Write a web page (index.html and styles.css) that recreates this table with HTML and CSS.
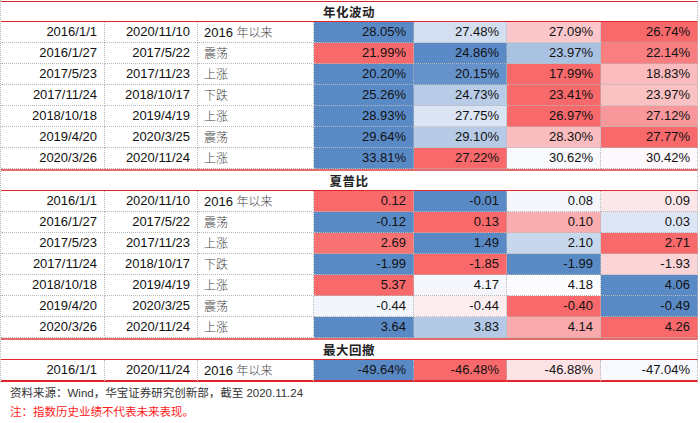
FILE: index.html
```html
<!DOCTYPE html>
<html lang="zh-CN">
<head>
<meta charset="utf-8">
<link rel="stylesheet" href="styles.css">
</head>
<body>
<div class="tbl">
  <div class="hd first">年化波动</div>
  <div class="c d">2016/1/1</div><div class="c d">2020/11/10</div><div class="c t">2016 <span class="cn">年以来</span></div>
  <div class="c n" style="background:#5A8AC6">28.05%</div><div class="c n" style="background:#D3DFF0">27.48%</div><div class="c n" style="background:#FBC7CA">27.09%</div><div class="c n" style="background:#F8696B">26.74%</div>
  <div class="c d">2016/1/27</div><div class="c d">2017/5/22</div><div class="c t"><span class="cn">震荡</span></div>
  <div class="c n" style="background:#F8696B">21.99%</div><div class="c n" style="background:#5A8AC6">24.86%</div><div class="c n" style="background:#AAC2E2">23.97%</div><div class="c n" style="background:#F97E80">22.14%</div>
  <div class="c d">2017/5/23</div><div class="c d">2017/11/23</div><div class="c t"><span class="cn">上涨</span></div>
  <div class="c n" style="background:#5A8AC6">20.20%</div><div class="c n" style="background:#6592CA">20.15%</div><div class="c n" style="background:#F8696B">17.99%</div><div class="c n" style="background:#FABBBE">18.83%</div>
  <div class="c d">2017/11/24</div><div class="c d">2018/10/17</div><div class="c t"><span class="cn">下跌</span></div>
  <div class="c n" style="background:#5A8AC6">25.26%</div><div class="c n" style="background:#B8CCE7">24.73%</div><div class="c n" style="background:#F8696B">23.41%</div><div class="c n" style="background:#FAC1C3">23.97%</div>
  <div class="c d">2018/10/18</div><div class="c d">2019/4/19</div><div class="c t"><span class="cn">上涨</span></div>
  <div class="c n" style="background:#5A8AC6">28.93%</div><div class="c n" style="background:#DAE4F3">27.75%</div><div class="c n" style="background:#F8696B">26.97%</div><div class="c n" style="background:#F9989B">27.12%</div>
  <div class="c d">2019/4/20</div><div class="c d">2020/3/25</div><div class="c t"><span class="cn">震荡</span></div>
  <div class="c n" style="background:#5A8AC6">29.64%</div><div class="c n" style="background:#B7CBE7">29.10%</div><div class="c n" style="background:#FABDBF">28.30%</div><div class="c n" style="background:#F8696B">27.77%</div>
  <div class="c d">2020/3/26</div><div class="c d">2020/11/24</div><div class="c t"><span class="cn">上涨</span></div>
  <div class="c n" style="background:#5A8AC6">33.81%</div><div class="c n" style="background:#F8696B">27.22%</div><div class="c n" style="background:#F7F9FD">30.62%</div><div class="c n" style="background:#FCF8FB">30.42%</div>

  <div class="hd">夏普比</div>
  <div class="c d">2016/1/1</div><div class="c d">2020/11/10</div><div class="c t">2016 <span class="cn">年以来</span></div>
  <div class="c n" style="background:#F8696B">0.12</div><div class="c n" style="background:#5A8AC6">-0.01</div><div class="c n" style="background:#F4F6FC">0.08</div><div class="c n" style="background:#FBE7EA">0.09</div>
  <div class="c d">2016/1/27</div><div class="c d">2017/5/22</div><div class="c t"><span class="cn">震荡</span></div>
  <div class="c n" style="background:#5A8AC6">-0.12</div><div class="c n" style="background:#F8696B">0.13</div><div class="c n" style="background:#FAADAF">0.10</div><div class="c n" style="background:#DDE6F4">0.03</div>
  <div class="c d">2017/5/23</div><div class="c d">2017/11/23</div><div class="c t"><span class="cn">上涨</span></div>
  <div class="c n" style="background:#F87274">2.69</div><div class="c n" style="background:#5A8AC6">1.49</div><div class="c n" style="background:#C7D7EC">2.10</div><div class="c n" style="background:#F8696B">2.71</div>
  <div class="c d">2017/11/24</div><div class="c d">2018/10/17</div><div class="c t"><span class="cn">下跌</span></div>
  <div class="c n" style="background:#5A8AC6">-1.99</div><div class="c n" style="background:#F8696B">-1.85</div><div class="c n" style="background:#5A8AC6">-1.99</div><div class="c n" style="background:#FBD4D7">-1.93</div>
  <div class="c d">2018/10/18</div><div class="c d">2019/4/19</div><div class="c t"><span class="cn">上涨</span></div>
  <div class="c n" style="background:#F8696B">5.37</div><div class="c n" style="background:#F5F7FD">4.17</div><div class="c n" style="background:#FCFBFE">4.18</div><div class="c n" style="background:#5A8AC6">4.06</div>
  <div class="c d">2019/4/20</div><div class="c d">2020/3/25</div><div class="c t"><span class="cn">震荡</span></div>
  <div class="c n" style="background:#F3F5FC">-0.44</div><div class="c n" style="background:#FCEEF0">-0.44</div><div class="c n" style="background:#F8696B">-0.40</div><div class="c n" style="background:#5A8AC6">-0.49</div>
  <div class="c d">2020/3/26</div><div class="c d">2020/11/24</div><div class="c t"><span class="cn">上涨</span></div>
  <div class="c n" style="background:#5A8AC6">3.64</div><div class="c n" style="background:#B3C9E5">3.83</div><div class="c n" style="background:#FAAAAC">4.14</div><div class="c n" style="background:#F8696B">4.26</div>

  <div class="hd">最大回撤</div>
  <div class="c d last">2016/1/1</div><div class="c d last">2020/11/24</div><div class="c t last">2016 <span class="cn">年以来</span></div>
  <div class="c n last" style="background:#5A8AC6">-49.64%</div><div class="c n last" style="background:#F8696B">-46.48%</div><div class="c n last" style="background:#FBE3E6">-46.88%</div><div class="c n last" style="background:#F7F9FE">-47.04%</div>
</div>
<p class="src">资料来源：Wind，华宝证券研究创新部，截至 2020.11.24</p>
<p class="note">注：指数历史业绩不代表未来表现。</p>
</body>
</html>
```
FILE: styles.css
```css
html, body {
  margin: 0;
  padding: 0;
  background: #ffffff;
}
body {
  font-family: "Liberation Sans", Arial, "Noto Sans CJK SC", sans-serif;
  color: #111;
  width: 700px;
}
.tbl {
  display: grid;
  grid-template-columns: 104px 93px 116px 100px 93px 94px 97px;
  padding-top: 1px;
  border-left: 1px dotted #b8b8b8;
  width: 697px;
}
.c {
  box-sizing: border-box;
  height: 21px;
  border-right: 1px dotted #b8b8b8;
  border-bottom: 1px dotted #b8b8b8;
  font-size: 13px;
  line-height: 20px;
  white-space: nowrap;
  overflow: hidden;
}
.d, .n {
  text-align: right;
  padding-right: 7px;
}
.t {
  text-align: left;
  padding-left: 6px;
}
.cn {
  font-family: "Noto Sans CJK SC", sans-serif;
  font-size: 12px;
  color: #444;
  font-weight: 300;
}
.hd {
  grid-column: 1 / -1;
  box-sizing: border-box;
  height: 22px;
  border-top: 2px solid #e46a6c;
  border-bottom: 1px solid #e0282c;
  border-right: 1px dotted #b8b8b8;
  text-align: center;
  font-family: "Noto Sans CJK SC", sans-serif;
  font-weight: 700;
  font-size: 12.5px;
  line-height: 19px;
  color: #222;
  letter-spacing: 0.5px;
}
.hd.first {
  height: 21px;
  border-top: 1px solid #d9262c;
}
.last {
  border-bottom: 2px solid #e0282c;
  height: 22px;
}
.src, .note {
  margin: 0;
  padding-left: 10px;
  font-family: "Liberation Sans", Arial, "Noto Sans CJK SC", sans-serif;
  font-size: 11.5px;
  line-height: 19px;
}
.src {
  margin-top: 2px;
  color: #333;
}
.note {
  color: #ff1a1a;
}
```
